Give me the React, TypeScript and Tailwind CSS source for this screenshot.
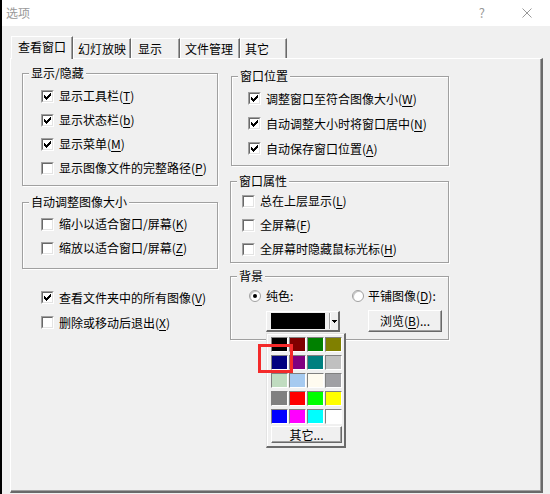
import type { ReactNode } from "react";

const CheckMark = () => (
  <svg width="7" height="7" viewBox="0 0 7 7" shapeRendering="crispEdges">
    <rect x="0" y="2" width="1" height="3" fill="#000" />
    <rect x="1" y="3" width="1" height="3" fill="#000" />
    <rect x="2" y="4" width="1" height="3" fill="#000" />
    <rect x="3" y="3" width="1" height="3" fill="#000" />
    <rect x="4" y="2" width="1" height="3" fill="#000" />
    <rect x="5" y="1" width="1" height="3" fill="#000" />
    <rect x="6" y="0" width="1" height="3" fill="#000" />
  </svg>
);

const Box = ({ checked }: { checked?: boolean }) => (
  <span className="flex h-[13px] w-[13px] shrink-0 border border-t-[#a0a0a0] border-l-[#a0a0a0] border-r-white border-b-white">
    <span className="flex h-[11px] w-[11px] items-center justify-center border border-t-[#696969] border-l-[#696969] border-r-[#e3e3e3] border-b-[#e3e3e3] bg-white">
      {checked && <CheckMark />}
    </span>
  </span>
);

const Key = ({ k }: { k: string }) => (
  <span className="underline underline-offset-[2px]">{k}</span>
);

const CheckRow = ({
  checked,
  text,
  k,
  h = "h-[24px]",
}: {
  checked?: boolean;
  text: string;
  k: string;
  h?: string;
}) => (
  <div className={`flex items-center gap-[5px] ${h}`}>
    <Box checked={checked} />
    <span className="whitespace-nowrap">
      {text}(<Key k={k} />)
    </span>
  </div>
);

const Radio = ({ checked }: { checked?: boolean }) => (
  <span className="flex h-[12px] w-[12px] shrink-0 items-center justify-center rounded-full border border-[#a0a0a0] bg-white shadow-[inset_1px_1px_0_#c8c8c8]">
    {checked && <span className="h-[4px] w-[4px] rounded-full bg-black" />}
  </span>
);

const Group = ({
  title,
  className,
  children,
}: {
  title: string;
  className: string;
  children: ReactNode;
}) => (
  <div
    className={`relative border border-[#a0a0a0] shadow-[1px_1px_0_#fff,inset_1px_1px_0_#fff] ${className}`}
  >
    <span className="absolute -top-[8px] left-[6px] bg-[#f0f0f0] px-[2px] leading-[14px] whitespace-nowrap">
      {title}
    </span>
    {children}
  </div>
);

const swatches = [
  "bg-[#000000]", "bg-[#800000]", "bg-[#008000]", "bg-[#808000]",
  "bg-[#000080]", "bg-[#800080]", "bg-[#008080]", "bg-[#c0c0c0]",
  "bg-[#c0dcc0]", "bg-[#a6caf0]", "bg-[#fffbf0]", "bg-[#a0a0a4]",
  "bg-[#808080]", "bg-[#ff0000]", "bg-[#00ff00]", "bg-[#ffff00]",
  "bg-[#0000ff]", "bg-[#ff00ff]", "bg-[#00ffff]", "bg-[#ffffff]",
];

const raised =
  "border border-t-white border-l-white border-r-[#696969] border-b-[#696969] shadow-[inset_-1px_-1px_0_#a0a0a0] bg-[#f0f0f0]";

export default function App() {
  return (
    <div className="flex h-[494px] w-[550px] overflow-hidden bg-[#f0f0f0] font-['Noto_Sans_CJK_SC',sans-serif] text-[12px] leading-[14px] text-black">
      <div className="w-[2px] shrink-0 bg-black" />
      <div className="flex min-w-0 flex-1 flex-col">
        {/* Title bar */}
        <div className="flex h-[26px] shrink-0 items-center bg-white pl-[4px]">
          <span className="text-[#999]">选项</span>
          <span className="ml-auto text-[13px] text-[#999]">?</span>
          <svg className="ml-[37px] mr-[18px]" width="10" height="10" viewBox="0 0 10 10">
            <path d="M0.5 0.5 L9.5 9.5 M9.5 0.5 L0.5 9.5" stroke="#999" strokeWidth="1" />
          </svg>
        </div>

        <div className="flex flex-1 flex-col pl-[8px] pr-[7px] pt-[10px]">
          {/* Tabs */}
          <div className="flex h-[22px] shrink-0 items-end pl-[1px]">
            <div className="relative z-10 -mb-[1px] h-[23px] w-[62px] border-l border-t border-l-white border-t-white border-r border-r-[#696969] bg-[#f0f0f0] pl-[6px] pt-[3px] shadow-[inset_-1px_0_0_#a0a0a0]">
              查看窗口
            </div>
            <div className="h-[20px] w-[58px] border-l border-t border-l-white border-t-white border-r border-r-[#696969] pl-[4px] pt-[3px] shadow-[inset_-1px_0_0_#a0a0a0]">
              幻灯放映
            </div>
            <div className="h-[20px] w-[49px] border-l border-t border-l-white border-t-white border-r border-r-[#696969] pl-[6px] pt-[3px] shadow-[inset_-1px_0_0_#a0a0a0]">
              显示
            </div>
            <div className="h-[20px] w-[60px] border-l border-t border-l-white border-t-white border-r border-r-[#696969] pl-[4px] pt-[3px] shadow-[inset_-1px_0_0_#a0a0a0]">
              文件管理
            </div>
            <div className="h-[20px] w-[47px] border-l border-t border-l-white border-t-white border-r border-r-[#696969] pl-[4px] pt-[3px] shadow-[inset_-1px_0_0_#a0a0a0]">
              其它
            </div>
          </div>

          {/* Panel */}
          <div className="flex h-[435px] shrink-0 gap-[12px] border-l border-t border-l-white border-t-white border-r-2 border-b-2 border-r-[#696969] border-b-[#696969] pl-[11px] shadow-[inset_-1px_-1px_0_#a0a0a0]">
            {/* Left column */}
            <div className="flex w-[196px] flex-col">
              <Group title="显示/隐藏" className="mt-[14px] h-[113px] pl-[18px] pt-[10px]">
                <CheckRow checked text="显示工具栏" k="T" />
                <CheckRow checked text="显示状态栏" k="b" />
                <CheckRow checked text="显示菜单" k="M" />
                <CheckRow text="显示图像文件的完整路径" k="P" />
              </Group>
              <Group title="自动调整图像大小" className="mt-[16px] h-[67px] pl-[18px] pt-[9px]">
                <CheckRow text="缩小以适合窗口/屏幕" k="K" />
                <CheckRow text="缩放以适合窗口/屏幕" k="Z" />
              </Group>
              <div className="mt-[16px] pl-[19px]">
                <CheckRow checked text="查看文件夹中的所有图像" k="V" h="h-[25px]" />
                <CheckRow text="删除或移动后退出" k="X" h="h-[25px]" />
              </div>
            </div>

            {/* Right column */}
            <div className="flex w-[219px] flex-col">
              <Group title="窗口位置" className="ml-[1px] mt-[17px] h-[90px] w-[218px] pl-[16px] pt-[9px]">
                <CheckRow checked text="调整窗口至符合图像大小" k="W" h="h-[25px]" />
                <CheckRow checked text="自动调整大小时将窗口居中" k="N" h="h-[25px]" />
                <CheckRow checked text="自动保存窗口位置" k="A" h="h-[25px]" />
              </Group>
              <Group title="窗口属性" className="mt-[15px] h-[82px] pl-[11px] pt-[7px]">
                <CheckRow text="总在上层显示" k="L" />
                <CheckRow text="全屏幕" k="F" />
                <CheckRow text="全屏幕时隐藏鼠标光标" k="H" />
              </Group>
              <Group title="背景" className="z-10 mt-[13px] h-[64px] pl-[18px] pt-[11px]">
                <div className="flex h-[16px] items-center">
                  <div className="flex w-[103px] items-center gap-[5px]">
                    <Radio checked />
                    <span>纯色:</span>
                  </div>
                  <div className="flex items-center gap-[4px]">
                    <Radio />
                    <span className="whitespace-nowrap">
                      平铺图像(<Key k="D" />):
                    </span>
                  </div>
                </div>
                <div className="mt-[6px] flex items-start pl-[17px]">
                  {/* Colour combo */}
                  <div className="relative mt-[1px] flex h-[21px] w-[74px] border border-t-white border-l-white border-r-2 border-b-2 border-r-[#696969] border-b-[#696969] pb-[1px] pl-[4px] pt-[1px]">
                    <div className="h-[16px] w-[54px] bg-black" />
                    <div className="ml-[4px] h-[16px] w-[1px] bg-[#a0a0a0]" />
                    <div className="h-[16px] w-[1px] bg-white" />
                    <svg className="ml-[1px] mt-[7px]" width="5" height="3" viewBox="0 0 5 3" shapeRendering="crispEdges">
                      <path d="M0 0 H5 L2.5 3 Z" fill="#000" />
                    </svg>

                    {/* Palette popup */}
                    <div className="absolute left-[-1px] top-[21px] flex w-[80px] flex-col border-l border-t border-l-[#e3e3e3] border-t-[#e3e3e3] border-r-2 border-b-2 border-r-[#6a6a6a] border-b-[#6a6a6a] bg-[#f0f0f0] pb-[3px] pl-[4px] pt-[3px] shadow-[inset_1px_1px_0_#fff]">
                      <div className="grid grid-cols-[repeat(4,17px)] gap-x-[1px] gap-y-[3px]">
                        {swatches.map((c, i) => (
                          <div
                            key={i}
                            className={`h-[15px] w-[17px] border border-t-[#808080] border-l-[#808080] border-r-white border-b-white ${c}`}
                          />
                        ))}
                      </div>
                      <div className={`mt-[2px] flex h-[17px] w-[71px] items-center justify-center ${raised}`}>
                        其它...
                      </div>
                      <div className="absolute left-[-9px] top-[10px] h-[29px] w-[35px] border-[3px] border-[#f42a2a]" />
                    </div>
                  </div>
                  <div className={`ml-[28px] flex h-[22px] w-[74px] items-center justify-center ${raised}`}>
                    浏览(<Key k="B" />)...
                  </div>
                </div>
              </Group>
            </div>
          </div>
        </div>
      </div>
    </div>
  );
}
